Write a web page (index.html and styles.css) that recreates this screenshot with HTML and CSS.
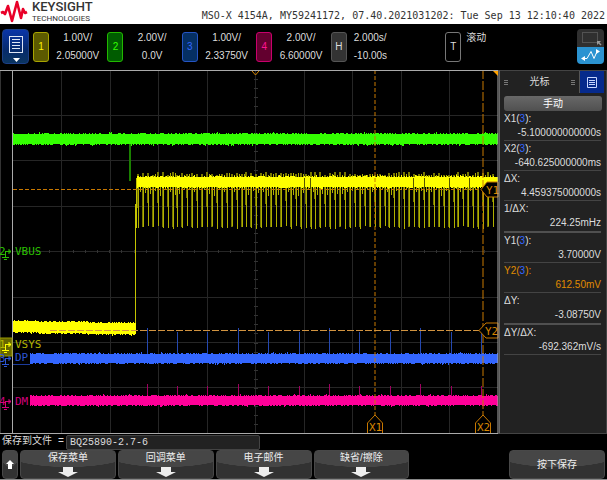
FILE: index.html
```html
<!DOCTYPE html>
<html lang="zh-CN">
<head>
    <meta charset="UTF-8">
    <title>MSO-X 4154A</title>
    <link rel="stylesheet" href="styles.css">
</head>
<body>
<div class="scope">
    <header class="brand">
        <svg class="logo" width="28" height="24" viewBox="0 0 28 24">
            <path d="M1 13 L3 12 L5 14 L8 6 L12 21 L17 2 L21 18 L23 9 L25 13 L27 12" fill="none" stroke="#e90029" stroke-width="2.6" stroke-linejoin="round"/>
        </svg>
        <div class="name">
            <strong>KEYSIGHT</strong>
            <span>TECHNOLOGIES</span>
        </div>
        <p class="info">MSO-X 4154A, MY59241172, 07.40.2021031202: Tue Sep 13 12:10:40 2022</p>
    </header>

    <div class="toolbar">
        <button class="menu" type="button" aria-label="菜单">
            <svg width="26" height="34" viewBox="0 0 26 34">
                <rect x="6.5" y="6.5" width="13" height="16" fill="none" stroke="#dfe6f5"/>
                <path d="M9 9.5h8M9 12.5h8M9 15.5h8M9 18.5h8" stroke="#dfe6f5"/>
                <path d="M10 28h7l-3.5 4z" fill="#fff"/>
            </svg>
        </button>
        <div class="channel">
            <button class="badge c1" type="button">1</button>
            <p>1.00V/<br>2.05000V</p>
        </div>
        <div class="channel">
            <button class="badge c2" type="button">2</button>
            <p>2.00V/<br>0.0V</p>
        </div>
        <div class="channel">
            <button class="badge c3" type="button">3</button>
            <p>1.00V/<br>2.33750V</p>
        </div>
        <div class="channel">
            <button class="badge c4" type="button">4</button>
            <p>2.00V/<br>6.60000V</p>
        </div>
        <div class="channel left">
            <button class="badge ch" type="button">H</button>
            <p>2.000s/<br>-10.00s</p>
        </div>
        <div class="channel trigger">
            <button class="badge ct" type="button">T</button>
            <p>滚动</p>
        </div>
        <div class="modes">
            <button class="mode" type="button" aria-label="缩放区域">
                <svg width="26" height="18" viewBox="0 0 26 18">
                    <rect x="5.5" y="3.5" width="15" height="10" fill="none" stroke="#777" stroke-dasharray="1 1"/>
                    <path d="M20 12h4l-1.500 1.500 2 2-1 1-2-2-1.500 1.500z" fill="#999"/>
                </svg>
            </button>
            <button class="mode on" type="button" aria-label="波形拖动">
                <svg width="26" height="17" viewBox="0 0 26 17">
                    <path d="M6 11.500H10L14 4.500L17 11.500L20 4.500H21" fill="none" stroke="#fff"/>
                    <path d="M8 9v5l-4-2.500zM19 2v5l4-2.500z" fill="#fff"/>
                </svg>
            </button>
        </div>
    </div>

    <main class="main">
        <svg class="plot" viewBox="0 0 499 364">
            <path id="grid" class="grid"/>
            <path id="ticks" class="ticks"/>
            <path class="edge" d="M0.500 0V364"/>

            <path id="green" class="green"/>
            <path class="green-dim" d="M130 74V111"/>
            <path id="bursts" class="yellow-dim"/>
            <path id="peaks" class="yellow-thin"/>
            <path id="yellow" class="yellow"/>
            <path class="yellow-gap" d="M304.500 108v12M310.500 108v12M413.500 108v12M424.500 108v12M449.500 108v12M469.500 108v12"/>
            <path class="yellow-rise" d="M135.500 262V134M136.500 158V108"/>
            <path id="low" class="yellow"/>
            <path id="dpSpikes" class="blue-dim"/>
            <path id="dp" class="blue"/>
            <path id="dmSpikes" class="pink-dim"/>
            <path id="dm" class="pink"/>

            <path class="cursor" stroke-dasharray="4 2" d="M13 119.500H485M375 0V346"/>
            <path class="cursor" stroke-dasharray="9 2" d="M483 0V346"/>
            <path class="cursor y2" stroke-dasharray="7 2" d="M50 260.500H480"/>
            <path class="flag" d="M481 119.500L487 112H498V127H487z"/>
            <path class="flag" d="M479 260.500L486 253H498V268H486z"/>
            <path class="flag" d="M367.500 363V353L375 345L382.500 353V363"/>
            <path class="flag" d="M475.500 363V353L483 345L490.500 353V363"/>
            <text class="flag-text" x="486" y="124">Y1</text>
            <text class="flag-text" x="485" y="265">Y2</text>
            <text class="flag-text" x="369" y="361">X1</text>
            <text class="flag-text" x="477" y="361">X2</text>

            <path class="frame" d="M0 0.500H498M0 363.500H498M12.500 0V364M498 0V364"/>
            <path d="M252 1L255.500 5L259 1" stroke="#d68500"/>
            <path d="M493 1H498V6z" fill="#ffa200"/>

            <rect class="tag-box" x="0" y="268" width="12" height="18"/>
            <g id="marks"></g>
            <rect x="14" y="281" width="15" height="12" fill="#000"/>
            <path d="M13 294.500H30" stroke="#1c3c9c"/>
            <text class="label t2" x="15" y="185">VBUS</text>
            <text class="label t1" x="15" y="278">VSYS</text>
            <text class="label t3" x="15" y="291">DP</text>
            <text class="label t4" x="15" y="335">DM</text>
        </svg>

        <aside class="panel">
            <div class="tabs">
                <h2 class="tab"><i></i>光标<i></i></h2>
                <button class="tab-menu" type="button" aria-label="列表">
                    <svg width="12" height="13" viewBox="0 0 12 13">
                        <path d="M1.500 1.500h9v10h-9zM3 4.500h6M3 6.500h6M3 8.500h6" fill="none" stroke="#c8d6ff"/>
                    </svg>
                </button>
            </div>
            <button class="manual" type="button">手动</button>
            <dl class="values">
                <div><dt>X1(<b>3</b>):</dt><dd>-5.100000000000s</dd></div>
                <div><dt>X2(<b>3</b>):</dt><dd>-640.625000000ms</dd></div>
                <div><dt>ΔX:</dt><dd>4.459375000000s</dd></div>
                <div class="end"><dt>1/ΔX:</dt><dd>224.25mHz</dd></div>
                <div><dt>Y1(<b>3</b>):</dt><dd>3.70000V</dd></div>
                <div class="active"><dt>Y2(<b>3</b>):</dt><dd>612.50mV</dd></div>
                <div class="end"><dt>ΔY:</dt><dd>-3.08750V</dd></div>
                <div><dt>ΔY/ΔX:</dt><dd>-692.362mV/s</dd></div>
            </dl>
        </aside>
    </main>

    <footer class="bottom">
        <div class="file">
            <label for="file">保存到文件 =</label>
            <input id="file" type="text" value="BQ25890-2.7-6">
        </div>
        <div class="keys">
            <button class="key" type="button" aria-label="返回">
                <svg width="8" height="9" viewBox="0 0 8 9"><path d="M4 0l4 4H6v5H2V4H0z" fill="#fff"/></svg>
            </button>
            <button class="key" type="button">保存菜单
                <svg width="20" height="10" viewBox="0 0 20 10"><path d="M5 0h10v5h5l-10 5l-10-5h5z" fill="#eee"/></svg>
            </button>
            <button class="key" type="button">回调菜单
                <svg width="20" height="10" viewBox="0 0 20 10"><path d="M5 0h10v5h5l-10 5l-10-5h5z" fill="#eee"/></svg>
            </button>
            <button class="key" type="button">电子邮件
                <svg width="20" height="10" viewBox="0 0 20 10"><path d="M5 0h10v5h5l-10 5l-10-5h5z" fill="#eee"/></svg>
            </button>
            <button class="key" type="button">缺省/擦除
                <svg width="20" height="10" viewBox="0 0 20 10"><path d="M5 0h10v5h5l-10 5l-10-5h5z" fill="#eee"/></svg>
            </button>
            <span></span>
            <button class="key" type="button">按下保存</button>
        </div>
    </footer>
</div>
<script src="scope.js"></script>
</body>
</html>
```

FILE: styles.css
```css
* {
    box-sizing: border-box;
    margin: 0;
    padding: 0;
}

body {
    background: #000;
    color: #ddd;
    font: 10px/12px "Liberation Sans", "Noto Sans CJK SC", sans-serif;
}

button {
    border: 0;
    color: inherit;
    font: inherit;
    cursor: pointer;
}

svg {
    display: block;
}

.scope {
    border-bottom: 1px solid #888;
}

/* header */
.brand {
    display: flex;
    align-items: center;
    height: 24px;
    background: #fff;
    color: #333;
}

.name {
    flex: 1;
    padding-left: 4px;
    font-family: Roboto, sans-serif;
}

.name strong,
.name span {
    display: block;
}

.name strong {
    font-size: 13px;
    font-weight: 500;
    line-height: 14px;
}

.name span {
    font-size: 8px;
    line-height: 10px;
}

.info {
    padding-top: 8px;
    padding-right: 2px;
    font-family: "DejaVu Sans Mono", monospace;
    white-space: nowrap;
}

/* channels */
.toolbar {
    display: grid;
    grid-template-columns: 31px repeat(4, 13fr) 20fr 23fr 28px;
    padding: 5px 2px;
}

.menu {
    width: 27px;
    height: 35px;
    border: 1px solid #1c3f86;
    border-radius: 4px;
    background: linear-gradient(#0a35a8, #062a6c 60%, #0b3560);
}

.channel {
    display: flex;
    align-items: center;
}

.channel p {
    flex: 1;
    padding-right: 1px;
    line-height: 18px;
    text-align: center;
}

.channel.left p,
.channel.trigger p {
    padding-left: 7px;
    text-align: left;
}

.channel.trigger p {
    align-self: flex-start;
    padding-left: 5px;
}

.badge {
    width: 16px;
    height: 30px;
    border: 1px solid;
    border-radius: 3px;
}

.c1 { background: #5c5a00; border-color: #a8a400; color: #fff200; }
.c2 { background: #005c00; border-color: #22b800; color: #33ff00; }
.c3 { background: #052f63; border-color: #2554c4; color: #3468ff; }
.c4 { background: #63002f; border-color: #c8006c; color: #ff1493; }
.ch { background: #333; border-color: #555; color: #ddd; }
.ct { background: #000; border-color: #777; color: #ddd; }

.mode {
    display: block;
    width: 27px;
    height: 18px;
    border-radius: 4px 4px 0 0;
    background: #303030;
}

.mode.on {
    height: 17px;
    border-radius: 0 0 4px 4px;
    background: #2b93d1;
}

/* waveform */
.main {
    display: flex;
}

.plot {
    flex: 1;
    min-width: 0;
    fill: none;
}

.grid { stroke: #262626; }
.ticks { stroke: #333; }
.edge { stroke: #333; }
.frame { stroke: #aaa; }
.green { fill: #33ff00; }
.green-dim { stroke: #1a8000; stroke-width: 2; }
.yellow { fill: #ffff00; }
.yellow-dim { stroke: #777700; stroke-width: 2; }
.yellow-thin { stroke: #b0b000; }
.yellow-rise { stroke: #c4c400; }
.yellow-gap { stroke: #555500; }
.blue { fill: #3366ff; }
.blue-dim { stroke: #2448b0; }
.pink { fill: #ff0099; }
.pink-dim { stroke: #a00060; }
.cursor { stroke: #c87800; }
.cursor.y2 { stroke: #d29440; }
.flag { fill: #000; stroke: #c87800; }

.flag-text,
.label {
    font-family: "DejaVu Sans Mono", monospace;
    font-size: 11px;
}

.flag-text { fill: #d68500; }
.t1 { fill: #b4b400; }
.t2 { fill: #2bc000; }
.t3 { fill: #2b55d4; }
.t4 { fill: #d4007c; }
.s1 { stroke: #ffff00; }
.s2 { stroke: #2bc000; }
.s3 { stroke: #2b55d4; }
.s4 { stroke: #d4007c; }

.tag-box {
    fill: #666600;
    stroke: #999900;
}

/* cursor panel */
.panel {
    width: 108px;
    padding-right: 2px;
    border: 1px solid #444;
    border-left-color: #666;
    background: #222;
}

.tabs {
    display: flex;
    height: 22px;
}

.tab {
    display: flex;
    flex: 1;
    align-items: center;
    justify-content: space-between;
    padding: 0 4px;
    border-right: 1px solid #555;
    font-size: 10px;
    font-weight: normal;
}

.tab i {
    width: 4px;
    height: 5px;
    background: repeating-linear-gradient(#777 0 1px, transparent 1px 2px);
}

.tab-menu {
    display: flex;
    align-items: center;
    justify-content: center;
    width: 24px;
    background: #062a8c;
}

.manual {
    display: block;
    width: calc(100% - 6px);
    height: 15px;
    margin: 3px 3px 0 4px;
    border-radius: 3px;
    background: linear-gradient(#686868, #505050);
    color: #fff;
}

.values {
    padding: 0 3px 0 4px;
}

.values div {
    height: 30px;
    border-bottom: 1px solid #444;
    line-height: 15px;
}

.values .end {
    height: 32px;
    border-bottom: 2px solid #505050;
}

.values b {
    color: #3366ff;
    font-weight: normal;
}

.values dd {
    text-align: right;
    line-height: 14px;
}

.values .active {
    color: #e08c00;
}

/* soft keys */
.file {
    display: flex;
    align-items: center;
    height: 16px;
    padding-left: 2px;
    font-family: "Liberation Mono", "Noto Sans CJK SC", monospace;
}

.file label {
    width: 64px;
    white-space: nowrap;
}

.file input {
    width: 32%;
    height: 15px;
    padding: 0 3px;
    border: 1px solid #444;
    border-radius: 2px;
    background: #222;
    color: #ddd;
    font: inherit;
}

.keys {
    display: grid;
    grid-template-columns: 16px repeat(6, 1fr);
    gap: 2px;
    padding: 0 2px;
}

.key {
    display: flex;
    flex-direction: column;
    align-items: center;
    justify-content: center;
    gap: 3px;
    height: 29px;
    border: 1px solid #484848;
    border-radius: 4px;
    background: radial-gradient(ellipse 70% 60% at 50% 0, #464646 98%, #323232);
    color: #eee;
}
```

FILE: scope.js
```js
var seed = 7;
function rnd() {
    seed = (seed * 16807) % 2147483647;
    return seed / 2147483647;
}

function set(id, d) {
    document.getElementById(id).setAttribute("d", d);
}

// filled band with a ragged edge on both sides
function band(x0, x1, top, height, slope) {
    var up = "M" + x0 + " " + top;
    var down = "";
    for (var x = x0; x < x1; x++) {
        var y = Math.round(top + (x - x0) * slope);
        var a = y - (rnd() < 0.4 ? 1 : 0) - (rnd() < 0.05 ? 1 : 0);
        var b = y + height + (rnd() < 0.4 ? 1 : 0) + (rnd() < 0.05 ? 1 : 0);
        up += "L" + x + " " + a + "H" + (x + 1);
        down = "L" + (x + 1) + " " + b + "H" + x + down;
    }
    return up + down + "Z";
}

var grid = "";
var ticks = "";
var i, x;
for (i = 1; i < 10; i++) {
    x = Math.floor(13 + i * 48.5) + 0.5;
    grid += "M" + x + " 1V363";
}
for (i = 1; i < 8; i++) {
    grid += "M13 " + (Math.floor(i * 45.4) + 0.5) + "H498";
}
for (i = 1; i < 40; i++) {
    ticks += "M" + (Math.floor(13 + i * 12.1) + 0.5) + " 180v3";
    ticks += "M254 " + (Math.floor(i * 9.1) + 0.5) + "h4";
}
set("grid", grid);
set("ticks", ticks);

set("green", band(13, 498, 64, 10, 0));
set("yellow", band(137, 498, 107, 10, 0));
set("low", band(13, 136, 251, 11, 0.02));
set("dp", band(30, 498, 284, 9, 0));
set("dm", band(30, 498, 326, 9, 0));

// switching bursts hanging under the VSYS level
var bursts = "";
var peaks = "";
for (i = 0; i < 73; i++) {
    x = 138 + Math.round(i * 4.93);
    bursts += "M" + x + " " + (102 + Math.round(rnd() * 3)) + "V" + (128 + Math.round(rnd() * 10));
    if (i % 2) {
        bursts += "M" + x + " 117V157";
    }
    peaks += "M" + (x + 2.5) + " " + (103 + Math.round(rnd() * 4)) + "V" + (118 + Math.round(rnd() * 8));
    peaks += "M" + (x + 0.5) + " 117V" + (156 + Math.round(rnd() * 3));
}
set("bursts", bursts);
set("peaks", peaks);

var dp = "";
var dm = "";
for (i = 0; i < 12; i++) {
    x = Math.floor(147 + i * 30.4) + 0.5;
    dp += "M" + x + " " + (i % 3 ? 262 : 258) + "V284";
    dm += "M" + x + " " + (i % 3 ? 316 : 314) + "V326";
}
set("dpSpikes", dp);
set("dmSpikes", dm);

// channel ground markers on the left edge
var marks = "";
[[2, 181], [3, 288], [1, 274], [4, 331]].forEach(function (m) {
    var y = m[1];
    marks += '<text class="label t' + m[0] + '" x="-1" y="' + (y + 4) + '">' + m[0] + '</text>' +
        '<path class="s' + m[0] + '" d="M5 ' + (y + 0.5) + 'h6M9 ' + (y - 2) + 'v5M10 ' + (y - 1) + 'v3M5.5 ' +
        y + 'v6M2 ' + (y + 6.5) + 'h7M4 ' + (y + 8.5) + 'h3"/>';
});
document.getElementById("marks").innerHTML = marks;
```
